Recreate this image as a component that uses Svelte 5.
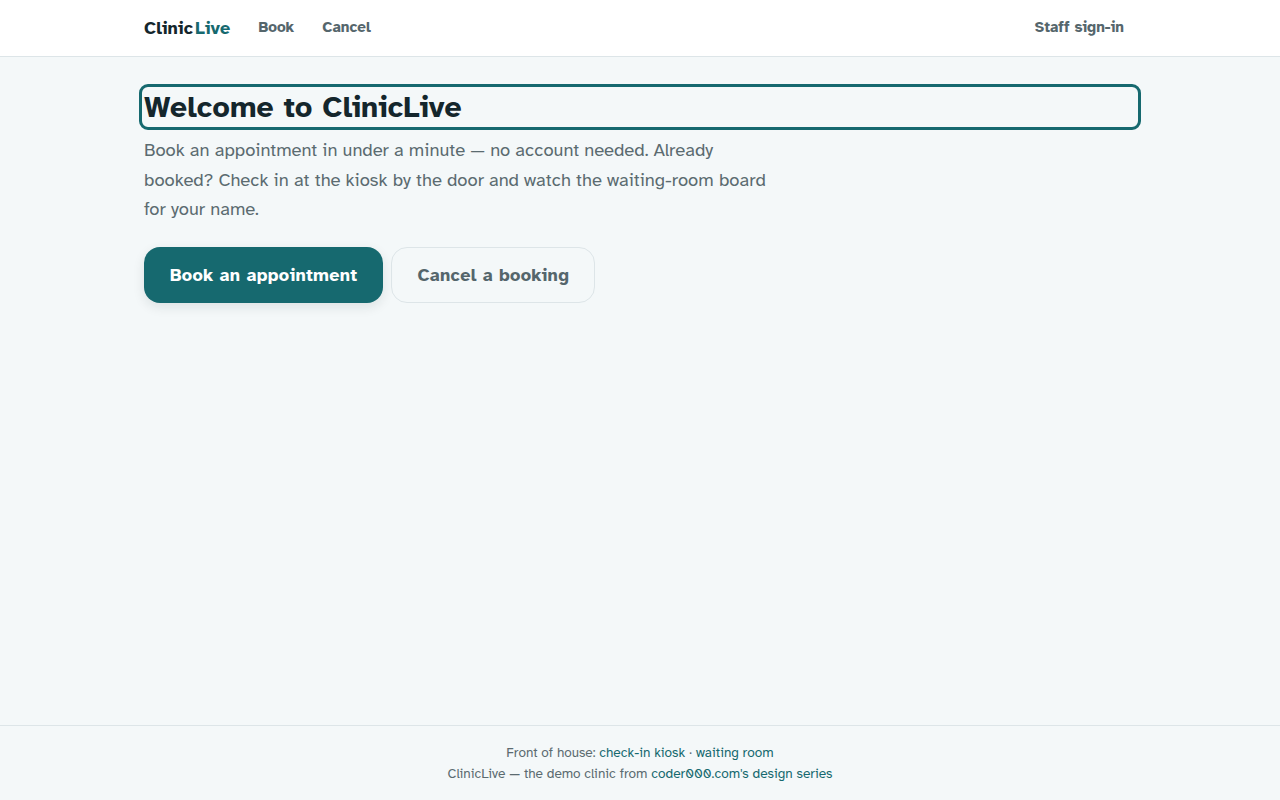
<script lang="ts">
  const navLinks = ['Book', 'Cancel']
</script>

<div class="page">
  <header class="topbar">
    <div class="topbar-inner">
      <a class="brand" href="#home">Clinic<span>Live</span></a>
      <nav class="nav">
        {#each navLinks as link}
          <a href="#{link.toLowerCase()}">{link}</a>
        {/each}
      </nav>
      <a class="staff" href="#staff">Staff sign-in</a>
    </div>
  </header>

  <main class="content">
    <h1>Welcome to ClinicLive</h1>
    <p class="lead">
      Book an appointment in under a minute — no account needed. Already booked? Check in at the
      kiosk by the door and watch the waiting-room board for your name.
    </p>
    <div class="actions">
      <a class="btn primary" href="#book">Book an appointment</a>
      <a class="btn secondary" href="#cancel">Cancel a booking</a>
    </div>
  </main>

  <footer class="footer">
    <p>Front of house: <a href="#kiosk">check-in kiosk</a> · <a href="#board">waiting room</a></p>
    <p>ClinicLive — the demo clinic from <a href="#coder">coder000.com's design series</a></p>
  </footer>
</div>

<style>
  :global(body) {
    margin: 0;
    background: #f4f8f9;
    font-family: "Atkinson Hyperlegible", Inter, "Liberation Sans", sans-serif;
    color: #14262c;
  }
  a { text-decoration: none; }
  .page { min-height: 800px; display: flex; flex-direction: column; }

  .topbar { background: #fff; border-bottom: 1px solid #dde5e8; height: 56px; }
  .topbar-inner {
    max-width: 992px; height: 100%; margin: 0 auto; padding: 0 16px;
    display: flex; align-items: center;
  }
  .brand { font-size: 18px; letter-spacing: 0.2px; font-weight: 700; color: #14262c; margin-right: 16px; }
  .brand span { color: #16696f; margin-left: 2px; }
  .nav { display: flex; gap: 4px; flex: 1; }
  .nav a, .staff { font-size: 15.2px; font-weight: 700; color: #55666c; padding: 6px 12px 8px; }

  .content { flex: 1; width: 992px; margin: 0 auto; padding: 32px 0 0; }
  h1 {
    margin: 0; font-size: 30px; letter-spacing: 0.2px; line-height: 36px; font-weight: 700; color: #14262c;
    outline: 3px solid #16696f; outline-offset: 2px; border-radius: 4px;
  }
  .lead {
    margin: 11.35px 0 0; max-width: 640px; font-size: 18.4px; line-height: 29.44px; color: #5b6b70;
  }
  .actions { display: flex; gap: 8px; margin-top: 22px; }
  .btn {
    display: flex; align-items: center; height: 56px; box-sizing: border-box;
    padding: 0 26px; border-radius: 16px; font-size: 18px; letter-spacing: 0.3px; font-weight: 700;
  }
  .primary { background: #16696f; color: #fff; box-shadow: 0 4px 12px rgba(20, 38, 44, 0.1); }
  .secondary { color: #55666c; padding: 0 25px; border: 1px solid #dde5e8; }

  .footer {
    border-top: 1px solid #dde5e8; height: 75px; box-sizing: border-box; padding-top: 16px;
    text-align: center; font-size: 13.6px; line-height: 21px; color: #5b6b70;
  }
  .footer p { margin: 0; }
  .footer a { color: #16696f; }
</style>
